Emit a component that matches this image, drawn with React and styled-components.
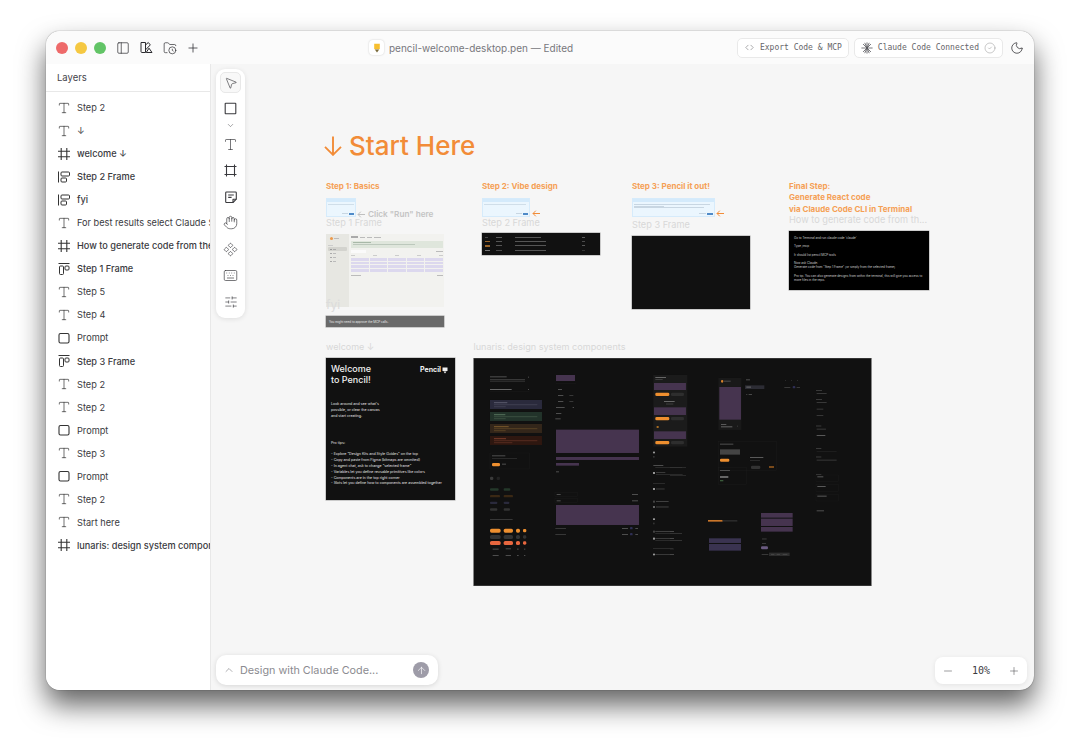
import React from "react";
import styled, { createGlobalStyle } from "styled-components";
import {
  PanelLeft, FolderClock, Plus, ChevronsLeftRight, CircleCheck, Moon, Type, ChevronDown,
  MousePointer2, Hand, Component, Keyboard, SlidersHorizontal, ChevronUp, ArrowUp, Minus,
} from "lucide-react";

const GlobalStyle = createGlobalStyle`
  html, body { margin: 0; padding: 0; background: #fff; }
  body { font-family: Inter, "Noto Sans", sans-serif; }
`;

const Page = styled.div`
  width: 1080px;
  height: 751px;
  padding: 31px 46px 61px;
  box-sizing: border-box;
  overflow: hidden;
`;

const Window = styled.div`
  height: 659px;
  display: flex;
  flex-direction: column;
  border-radius: 14px;
  overflow: hidden;
  background: #f6f6f6;
  box-shadow: 0 0 1px rgba(0,0,0,.7), 0 15px 28px rgba(0,0,0,.62);
`;

const TitleBar = styled.div`
  height: 33px;
  flex: none;
  display: flex;
  align-items: center;
  padding: 0 10px;
  background: #fbfbfb;
  position: relative;
`;

const Lights = styled.div`
  display: flex;
  gap: 7px;
  margin-right: 10px;
`;

const Light = styled.span`
  width: 12px;
  height: 12px;
  border-radius: 50%;
  background: ${p => p.$c};
`;

const BarIcons = styled.div`
  display: flex;
  align-items: center;
  gap: 9px;
  color: #2c2c30;
`;

const FileTitle = styled.div`
  display: flex;
  align-items: center;
  gap: 5px;
  margin-left: 169px;
  font-size: 10px;
  color: #77777c;
`;

const FileLogo = styled.span`
  width: 15px;
  height: 15px;
  border-radius: 4px;
  background: #fff;
  box-shadow: 0 0 2px rgba(0,0,0,.2);
  display: flex;
  align-items: center;
  justify-content: center;
`;

const BarRight = styled.div`
  margin-left: auto;
  display: flex;
  align-items: center;
  gap: 5px;
`;

const MonoButton = styled.div`
  height: 20px;
  box-sizing: border-box;
  display: flex;
  align-items: center;
  gap: 5px;
  padding: 0 6px;
  border: 1px solid #e9e9e9;
  border-radius: 5px;
  background: #fff;
  font-family: "DejaVu Sans Mono", "Liberation Mono", monospace;
  font-size: 8px;
  color: #66666a;
`;

const ThemeIcon = styled.span`
  display: flex;
  margin-left: 2px;
  color: #2c2c30;
`;

const Body = styled.div`
  flex: 1;
  display: flex;
  min-height: 0;
`;

const Sidebar = styled.aside`
  width: 165px;
  flex: none;
  box-sizing: border-box;
  background: #fff;
  border-right: 1px solid #e8e8e8;
  overflow: hidden;
`;

const SideHeader = styled.div`
  height: 27px;
  padding-left: 11px;
  display: flex;
  align-items: center;
  font-size: 9.5px;
  color: #44444a;
  border-bottom: 1px solid #e8e8e8;
`;

const LayerList = styled.div`
  padding-top: 4px;
`;

const LayerRow = styled.div`
  height: 23.05px;
  display: flex;
  align-items: center;
  white-space: nowrap;
  font-size: 9.2px;
  font-weight: ${p => (p.$frame ? 500 : 400)};
  color: #3a3a3e;
`;

const LayerIcon = styled.span`
  width: 14px;
  margin: 0 6px 0 11px;
  flex: none;
  display: flex;
  justify-content: center;
  color: #333;
`;

const Canvas = styled.main`
  flex: 1;
  position: relative;
  overflow: hidden;
`;

const Toolbar = styled.div`
  position: absolute;
  left: 5px;
  top: 5px;
  width: 29px;
  height: 249px;
  box-sizing: border-box;
  padding-top: 3px;
  display: flex;
  flex-direction: column;
  align-items: center;
  background: #fff;
  border-radius: 9px;
  box-shadow: 0 1px 5px rgba(0,0,0,.1);
  color: #3a3a3e;
`;

const ToolButton = styled.div`
  width: 21px;
  height: ${p => p.$h || 26.4}px;
  flex: none;
  display: flex;
  align-items: center;
  justify-content: center;
  box-sizing: border-box;
  border-radius: 5px;
  ${p => p.$active && `
    height: 21px;
    margin-bottom: 5px;
    background: #f8f8f8;
    border: 1px solid #e8e8e8;
  `}
`;

const Item = styled.div`
  position: absolute;
  left: ${p => p.$x - 211}px;
  top: ${p => p.$y - 64}px;
`;

const Heading = styled(Item)`
  display: flex;
  align-items: center;
  gap: 7px;
  font-size: 26px;
  font-weight: 500;
  line-height: 30px;
  color: #f28c38;
  white-space: nowrap;
`;

const StepLabel = styled(Item)`
  font-size: 8px;
  font-weight: 700;
  line-height: 11.6px;
  color: #f5a055;
  white-space: nowrap;
`;

const FrameLabel = styled(Item)`
  font-size: ${p => p.$size || 9.2}px;
  line-height: 12px;
  font-weight: 400;
  color: #d8d8d8;
  white-space: nowrap;
`;

const RunHint = styled(Item)`
  display: flex;
  align-items: center;
  gap: 3px;
  font-size: 8.2px;
  font-weight: 600;
  line-height: 10px;
  color: #c4c4c4;
  white-space: nowrap;
`;

const PromptThumb = styled(Item)`
  width: ${p => p.$w}px;
  height: 18.5px;
  box-sizing: border-box;
  padding: 0 1px;
  display: flex;
  flex-direction: column;
  background: #ebf6fe;
  border: 1px solid #d6ebfb;
`;

const PromptHead = styled.div`
  height: 3px;
  margin: 0 -1px 2px;
  background: #d4eafb;
`;

const Line = styled.div`
  width: ${p => p.$w}px;
  height: ${p => p.$h || 1}px;
  margin-top: ${p => p.$mt || 0}px;
  flex: none;
  background: ${p => p.$c || "#888"};
`;

const RunRow = styled.div`
  margin-top: auto;
  margin-bottom: 1px;
  display: flex;
  justify-content: flex-end;
  align-items: center;
  gap: 1px;
`;

const Frame = styled(Item)`
  width: ${p => p.$w}px;
  height: ${p => p.$h}px;
  box-sizing: border-box;
  background: ${p => p.$bg || "#111"};
  box-shadow: 0 0 0 .5px rgba(0,0,0,.35);
  overflow: hidden;
`;

const AppFrame = styled(Frame)`
  display: flex;
  box-shadow: none;
`;

const AppSide = styled.div`
  width: 23px;
  flex: none;
  padding: 2px 2px;
  box-sizing: border-box;
  background: #e7e7e2;
  display: flex;
  flex-direction: column;
`;

const NavItem = styled.div`
  height: 4px;
  margin-top: ${p => p.$mt || 0}px;
  padding-left: 2px;
  display: flex;
  align-items: center;
  gap: 1px;
  border-radius: 1px;
  background: ${p => (p.$on ? "#d3d3ce" : "transparent")};
`;

const AppLogo = styled.span`
  width: 3px;
  height: 3px;
  border-radius: 50%;
  background: #ec9a4c;
`;

const AppMain = styled.div`
  flex: 1;
  padding: 2px 1px 0 2px;
  display: flex;
  flex-direction: column;
`;

const Tabs = styled.div`
  display: flex;
  gap: 2px;
  align-items: center;
`;

const Callout = styled.div`
  height: 7px;
  margin-top: 3px;
  padding: 1px 2px;
  box-sizing: border-box;
  background: #dfe6dc;
`;

const SplitRow = styled.div`
  margin-top: ${p => p.$mt || 0}px;
  display: flex;
  justify-content: space-between;
  align-items: center;
`;

const CellGrid = styled.div`
  margin-top: ${p => p.$mt || 0}px;
  display: grid;
  grid-template-columns: repeat(5, 1fr);
  gap: ${p => p.$gap || 0}px 1px;
`;

const Cell = styled.div`
  height: 2.7px;
  background: #dcd8ee;
`;

const TinyNote = styled(Frame)`
  padding-left: 3px;
  display: flex;
  align-items: center;
  background: #6a6a6a;
  font-size: 3px;
  color: #e8e8e8;
  white-space: nowrap;
`;

const FyiLabel = styled(Item)`
  font-size: 12px;
  line-height: 12px;
  color: #dcdcdc;
`;

const TableFrame = styled(Frame)`
  padding: 2px 3px 0;
  display: flex;
  flex-direction: column;
`;

const TableRow = styled.div`
  height: 4.4px;
  display: grid;
  grid-template-columns: 11px 19px 67px 1fr;
  align-items: center;
`;

const CodeFrame = styled(Frame)`
  padding: 5px 5px;
  background: #000;
  font-size: 3px;
  line-height: 4.1px;
  color: #d0d0d0;
  white-space: nowrap;
`;

const Para = styled.p`
  margin: 0 0 4.3px;
`;

const WelcomeFrame = styled(Frame)`
  padding: 6px 5px;
  color: #e6e6e6;
`;

const WelcomeHead = styled.div`
  display: flex;
  justify-content: space-between;
  align-items: flex-start;
`;

const WelcomeTitle = styled.div`
  font-size: 9px;
  line-height: 10.6px;
  font-weight: 500;
  color: #f2f2f2;
`;

const WelcomeLogo = styled.div`
  display: flex;
  align-items: center;
  gap: 1px;
  margin: 2px 2px 0 0;
  font-size: 7px;
  line-height: 8px;
  font-weight: 700;
  color: #f2f2f2;
`;

const WelcomeText = styled.div`
  margin-top: ${p => p.$mt}px;
  font-size: 3.6px;
  line-height: 5.8px;
  white-space: nowrap;
`;

const MiniSvg = styled.svg`
  position: absolute;
  left: ${473 - 211}px;
  top: ${358 - 64}px;
  display: block;
`;

const PromptBar = styled.div`
  position: absolute;
  left: 5px;
  bottom: 5px;
  width: 222px;
  height: 30px;
  box-sizing: border-box;
  padding: 0 9px 0 7px;
  display: flex;
  align-items: center;
  gap: 5px;
  background: #fff;
  border-radius: 10px;
  box-shadow: 0 1px 5px rgba(0,0,0,.13);
  font-size: 10.8px;
  color: #8b8b90;
`;

const SendButton = styled.span`
  width: 16px;
  height: 16px;
  margin-left: auto;
  border-radius: 50%;
  background: #9e9ca8;
  color: #fff;
  display: flex;
  align-items: center;
  justify-content: center;
`;

const ZoomBar = styled.div`
  position: absolute;
  right: 7px;
  bottom: 6px;
  width: 92px;
  height: 27px;
  box-sizing: border-box;
  padding: 0 7px;
  display: flex;
  align-items: center;
  justify-content: space-between;
  background: #fff;
  border-radius: 8px;
  box-shadow: 0 1px 5px rgba(0,0,0,.08);
  font-family: "DejaVu Sans Mono", monospace;
  font-size: 10px;
  color: #3a3a3e;
`;

// small drawn icons that the icon package has no match for
const HashIcon = () => (
  <svg width="14" height="14" viewBox="0 0 14 14" fill="none" stroke="currentColor" strokeWidth="1.1">
    <path d="M4.2 1v12M9.8 1v12M1 4.2h12M1 9.8h12" />
  </svg>
);

const StackIcon = () => (
  <svg width="14" height="14" viewBox="0 0 14 14" fill="none" stroke="currentColor" strokeWidth="1">
    <path d="M1.5 1.5v11" />
    <rect x="4" y="2" width="8.5" height="4" rx="1" />
    <rect x="4" y="8" width="5.5" height="4" rx="1" />
  </svg>
);

const RowIcon = () => (
  <svg width="14" height="14" viewBox="0 0 14 14" fill="none" stroke="currentColor" strokeWidth="1">
    <path d="M1.5 1.5h11" />
    <rect x="2.5" y="4" width="4" height="8.5" rx="1" />
    <rect x="8" y="4" width="4" height="4" rx="1" />
  </svg>
);

const RectIcon = () => (
  <svg width="14" height="14" viewBox="0 0 14 14" fill="none" stroke="currentColor" strokeWidth="1.1">
    <rect x="2" y="2.5" width="10" height="9.5" rx="1.5" />
  </svg>
);

const TextIcon = () => <Type size={14} strokeWidth={1.2} />;

const ShapesIcon = () => (
  <svg width="15" height="15" viewBox="0 0 15 15" fill="none" stroke="currentColor" strokeWidth="1" strokeLinejoin="round">
    <path d="M2 2.5h4.5v10H3a1 1 0 0 1-1-1z" />
    <path d="M6.5 5 9.3 2.5l2 2.4-4.8 5" />
    <path d="M10 8.2 13 12.5H7.2z" />
  </svg>
);

const FrameToolIcon = () => (
  <svg width="15" height="15" viewBox="0 0 15 15" fill="none" stroke="currentColor" strokeWidth="1.1">
    <path d="M1.5 3.5h12M1.5 11.5h12M3.5 1.5v12M11.5 1.5v12" />
  </svg>
);

const SquareToolIcon = () => (
  <svg width="13" height="13" viewBox="0 0 13 13" fill="none" stroke="currentColor" strokeWidth="1.1">
    <rect x="1.2" y="1.2" width="10.6" height="10.6" rx=".6" />
  </svg>
);

const NoteToolIcon = () => (
  <svg width="14" height="14" viewBox="0 0 14 14" fill="none" stroke="currentColor" strokeWidth="1.1" strokeLinejoin="round">
    <path d="M2.5 2h9a.8.8 0 0 1 .8.8v6.4L9 12.5H2.5a.8.8 0 0 1-.8-.8V2.8a.8.8 0 0 1 .8-.8z" />
    <path d="M9 12.5V9.2h3.3M4.2 5h5.6M4.2 7.4h3.4" />
  </svg>
);

const BurstIcon = () => (
  <svg width="12" height="12" viewBox="0 0 12 12" stroke="#55555a" strokeWidth=".8" strokeLinecap="round">
    <path d="M6 .8v10.4M.8 6h10.4M2.3 2.3l7.4 7.4M9.7 2.3l-7.4 7.4M3.9 1.2l4.2 9.6M8.1 1.2l-4.2 9.6" />
  </svg>
);

const PencilMark = ({ size = 10 }) => (
  <svg width={size} height={size} viewBox="0 0 10 10">
    <path d="M2.2.8h5.6v5.4H2.2z" fill="#f7bf2f" />
    <path d="M2.8 6.6h4.4L5 9.4z" fill="#7a6a3a" />
  </svg>
);

const WelcomeMark = () => (
  <svg width="6" height="7" viewBox="0 0 6 7">
    <path d="M.5.5h5v3.5h-5z" fill="#f2f2f2" />
    <path d="M1.5 4.6h3L3 6.6z" fill="#f2f2f2" />
  </svg>
);

const ArrowIcon = () => (
  <svg width="18" height="20" viewBox="0 0 18 20" fill="none" stroke="#f28c38" strokeWidth="1.9">
    <path d="M9 .5v18M1 10.8l8 8 8-8" />
  </svg>
);

const SideArrow = ({ color = "#f28c38" }) => (
  <svg width="8" height="7" viewBox="0 0 8 7" fill="none" stroke={color} strokeWidth="1">
    <path d="M8 3.5H1M3.8.7 1 3.5l2.8 2.8" />
  </svg>
);

const layers = [
  ["t", "Step 2"], ["t", "↓"], ["f", "welcome ↓"], ["s", "Step 2 Frame"], ["s", "fyi"],
  ["t", "For best results select Claude Sonnet"], ["f", "How to generate code from the design"],
  ["r", "Step 1 Frame"], ["t", "Step 5"], ["t", "Step 4"], ["b", "Prompt"], ["r", "Step 3 Frame"],
  ["t", "Step 2"], ["t", "Step 2"], ["b", "Prompt"], ["t", "Step 3"], ["b", "Prompt"], ["t", "Step 2"],
  ["t", "Start here"], ["f", "lunaris: design system components"],
];

const layerIcons = { t: TextIcon, f: HashIcon, s: StackIcon, r: RowIcon, b: RectIcon };

const PU = "#46344f";
const OR = "#ee8f2f";
const RD = "#e8673f";
const T1 = "#4f4f4f";
const T2 = "#383838";
const BD = "#1f1f1f";

// thumbnail of the design system frame, coordinates are in 3x crop units
const miniLeft = [
  [60,64,50,3,T1],[60,72,105,3,T2],[60,77,105,3,T2],[174,65,3,3,T1],[60,102,65,3,"#666"],[174,102,3,3,T1],[60,108,118,1,BD],
  [60,135,156,27,"#2a2a3c"],[72,142,40,2.5,"#667"],[72,148,130,2.5,"#445"],[72,154,35,2.5,"#445"],
  [60,171,156,27,"#22332a"],[72,178,34,2.5,"#5f7f66"],[72,184,130,2.5,"#3f5545"],[72,190,35,2.5,"#3f5545"],
  [60,207,156,27,"#33261a"],[72,214,44,2.5,"#8a6530"],[72,220,130,2.5,"#5f4726"],[72,226,35,2.5,"#5f4726"],
  [60,243,156,27,"#2e1710"],[72,250,36,2.5,"#8a4530"],[72,256,130,2.5,"#5f3022"],[72,262,55,2.5,"#5f3022"],
  [60,294,118,48,"none",BD],[66,301,40,3,T1],[66,309,75,2,T2],[66,324,24,10,OR],[96,326,12,3,T1],
  [60,365,10,10,"#3a3a3a"],[80,365,10,10,"#222"],
  [60,400,26,7,"#24382a"],[101,400,20,7,"#24382a"],[60,420,30,7,"#3a2814"],[101,420,28,7,"#3a2814"],
  [60,440,22,7,"#2a2a3c"],[101,440,17,7,"#2a2a3c"],[60,460,22,7,"#333"],[101,460,19,7,"#333"],[60,492,68,3,T2],
  [60,521,32,12,OR],[101,521,28,12,OR],[138,521,12,12,OR],[159,522,10,10,OR],
  [60,540,32,12,"#333"],[101,540,28,12,"#333"],[138,540,12,12,"#333"],[159,541,10,10,"#333"],
  [60,558,32,12,RD],[101,558,28,12,RD],[138,558,12,12,RD],[159,559,10,10,RD],
  [68,581,18,3,T1],[107,580,16,3,T1],[141,581,5,3,T1],[162,581,4,3,T1],
  [68,600,18,3,T1],[107,600,16,3,T1],[141,600,5,3,T1],[162,600,4,3,T1],
  [258,60,57,18,PU],[258,84,60,1,BD],[264,102,12,3,T1],[264,120,16,3,T1],[298,120,12,3,T2],
  [264,138,16,3,T1],[298,138,12,3,T2],[258,156,26,3,T1],[308,156,4,3,T1],[258,174,16,3,T1],[256,190,16,3,T1],
  [258,224,249,70,PU],[258,306,249,9,PU],[258,324,69,8,PU],[258,349,9,3,T1],
  [255,412,68,12,"none",BD],[260,417,12,3,T1],[486,417,18,3,T1],[255,431,68,12,"none",BD],[260,436,12,3,T1],[486,436,18,3,T1],
  [258,450,249,60,PU],[256,519,32,3,T2],[456,519,18,3,T1],[480,516,8,7,"#2f2f55"],[496,519,8,3,T1],
  [256,537,32,3,T2],[456,537,18,3,T1],[480,534,8,7,"#2f2f55"],[496,537,8,3,T1],
  [550,60,102,215,"#1b1b1b"],[556,66,32,3,"#666"],[556,72,22,2,T1],
  [552,84,96,21,PU],[556,113,42,10,OR],[603,113,39,10,"#2e2e2e"],[582,138,32,3,"#666"],[588,146,22,2,T1],
  [552,157,96,23,PU],[556,186,42,10,OR],[603,186,39,10,"#2e2e2e"],[560,213,6,6,"#a66b22"],
  [552,229,96,23,PU],[556,258,42,10,OR],[603,258,39,10,"#2e2e2e"],
  [549,290,6,5,"#999"],[549,303,5,5,"#333"],[550,330,30,2.5,"#5a5a5a"],[556,336,80,2,T2],
  [549,351,6,6,"#999"],[558,352,28,2,T1],[558,358,80,2,T2],[549,385,36,2,T2],[549,399,6,6,"#999"],[558,401,26,2,T1],
  [549,437,6,6,"#444"],[558,439,38,2,"#5a5a5a"],[549,453,6,6,"#666"],[558,455,38,2,"#5a5a5a"],
  [549,490,6,5,"#999"],[549,503,5,5,"#333"],[549,527,6,6,"#444"],[556,528,56,2,"#5a5a5a"],[556,534,80,2,T2],
  [549,548,6,6,"#999"],[556,550,56,2,T1],[556,556,80,2,T2],[549,580,60,2,T2],[549,596,6,5,"#999"],[556,597,56,2,T1],
];

const miniRight = [
  [0,337,48,2,T2],[0,360,48,2,T2],[0,529,12,2,T1],[0,535,36,2,T2],[0,550,12,2,T1],[0,556,36,2,T2],[0,581,12,2,T2],[0,597,12,2,T1],
  [145,69,69,156,"#191919"],[153,75,7,8,"#d8832c"],[162,77,20,3,T1],[148,96,65,98,PU],[153,207,16,3,"#5a5a5a"],[153,214,34,3,"#666"],[202,212,2,3,T1],
  [228,73,12,3,T1],[225,91,58,11,"#2c2c34"],[229,95,14,2.5,"#777"],[228,117,4,2,T1],[236,117,10,2,"#666"],
  [345,75,2,2,T1],[363,75,2,2,T1],[382,75,2,2,T1],[343,96,18,2,T1],[368,93,8,7,"#2f2f55"],[380,96,10,2,T1],
  [145,260,175,86,"none",BD],[145,338,85,50,"none",BD],[150,266,40,3,T1],[150,283,60,16,"#444"],[150,311,28,9,OR],
  [240,306,40,3,"#5a5a5a"],[240,315,30,2,T2],[243,332,28,10,"#333"],[297,333,15,6,"#7a4a1a"],[150,345,30,3,T1],[150,363,25,6,"#666"],[150,375,10,4,"#3a5a3a"],
  [438,105,18,2,T1],[440,114,30,3,T2],[438,132,18,2,T1],[440,141,30,3,T2],[440,161,20,3,T2],[440,180,20,3,T2],
  [438,212,16,2,T1],[440,221,28,3,T2],[440,240,26,3,"#5a5a5a"],[438,280,16,2,T1],[440,288,60,1,T2],[438,305,16,2,T1],[440,314,60,3,T2],
  [438,357,16,2,T1],[438,360,67,20,"none",BD],[442,364,18,3,"#5a5a5a"],[438,389,67,20,"none",BD],[442,393,25,3,"#5a5a5a"],[438,418,67,20,"none",BD],[442,422,28,3,"#5a5a5a"],[440,466,22,3,T1],
  [114,495,44,5,"#c9762a"],[158,495,44,5,"#2a2a2a"],[273,474,95,14,PU],[273,491,95,22,PU],[273,516,95,14,PU],
  [117,550,96,14,"#3a3350"],[117,567,96,20,"#3a3350"],[276,551,14,2,T1],[276,564,12,2,T1],[273,574,21,9,"#6a5a80"],[275,597,20,2,T1],
  [297,593,62,10,"#2e2e2e"],[303,597,10,2,T1],[320,597,10,2,T1],[338,597,14,2,T1],
];

const miniRects = list =>
  list.map(([x, y, w, h, fill, stroke], i) => (
    <rect
      key={i}
      x={x}
      y={y}
      width={w}
      height={h}
      rx={h >= 7 && h <= 12 && w <= 42 ? h / 2.5 : 0}
      fill={fill}
      stroke={stroke}
      strokeWidth={stroke ? 1 : 0}
    />
  ));

const DesignSystemThumb = () => (
  <MiniSvg width="399" height="228" viewBox="473 358 399 228">
    <rect x="473.5" y="358" width="398" height="228" fill="#111" stroke="#8a8a8a" strokeWidth=".6" />
    <g transform="translate(470 355) scale(.3333)">{miniRects(miniLeft)}</g>
    <g transform="translate(670 355) scale(.3333)">{miniRects(miniRight)}</g>
  </MiniSvg>
);

const tableRows = [
  ["#444", "#5a5a5a", "#555", "#5a5a5a"],
  ["#9a6428", "#555", "#555", "#4a4a4a"],
  ["#9a6428", "#555", "#555", "#555"],
  ["#777", "#4a4a4a", "#555", "#333"],
];

const App = () => (
  <Page>
    <GlobalStyle />
    <Window>
      <TitleBar>
        <Lights>
          <Light $c="#ee6a6a" />
          <Light $c="#f5c842" />
          <Light $c="#62c466" />
        </Lights>
        <BarIcons>
          <PanelLeft size={14} strokeWidth={1.2} />
          <ShapesIcon />
          <FolderClock size={14} strokeWidth={1.2} />
          <Plus size={14} strokeWidth={1.3} />
        </BarIcons>
        <FileTitle>
          <FileLogo><PencilMark /></FileLogo>
          pencil-welcome-desktop.pen — Edited
        </FileTitle>
        <BarRight>
          <MonoButton>
            <ChevronsLeftRight size={11} strokeWidth={1.2} />
            Export Code &amp; MCP
          </MonoButton>
          <MonoButton>
            <BurstIcon />
            Claude Code Connected
            <CircleCheck size={12} strokeWidth={.9} color="#888" />
          </MonoButton>
          <ThemeIcon><Moon size={14} strokeWidth={1.3} /></ThemeIcon>
        </BarRight>
      </TitleBar>
      <Body>
        <Sidebar>
          <SideHeader>Layers</SideHeader>
          <LayerList>
            {layers.map(([kind, name], i) => {
              const Icon = layerIcons[kind];
              return (
                <LayerRow key={i} $frame={kind === "f" || kind === "s" || kind === "r"}>
                  <LayerIcon><Icon /></LayerIcon>
                  {name}
                </LayerRow>
              );
            })}
          </LayerList>
        </Sidebar>
        <Canvas>
          <Heading $x={324} $y={131}>
            <ArrowIcon />
            Start Here
          </Heading>

          <StepLabel $x={326} $y={180.5}>Step 1: Basics</StepLabel>
          <StepLabel $x={482} $y={180.5}>Step 2: Vibe design</StepLabel>
          <StepLabel $x={632} $y={180.5}>Step 3: Pencil it out!</StepLabel>
          <StepLabel $x={789} $y={180.5}>
            Final Step:<br />Generate React code<br />via Claude Code CLI in Terminal
          </StepLabel>

          <PromptThumb $x={326} $y={198} $w={30}>
            <PromptHead />
            <Line $w={26} $c="#d0dee9" />
            <RunRow><Line $w={6} $c="#c8d6e2" /><Line $w={5} $h={2} $c="#4f8ac8" /></RunRow>
          </PromptThumb>
          <PromptThumb $x={482} $y={198} $w={48}>
            <PromptHead />
            <Line $w={42} $c="#d0dee9" />
            <RunRow><Line $w={6} $c="#c8d6e2" /><Line $w={5} $h={2} $c="#4f8ac8" /></RunRow>
          </PromptThumb>
          <PromptThumb $x={632} $y={198} $w={83}>
            <PromptHead />
            <Line $w={76} $c="#c8d6e2" />
            <Line $w={30} $c="#c8d6e2" $mt={.6} />
            <Line $w={70} $c="#c8d6e2" $mt={.6} />
            <RunRow><Line $w={7} $c="#c8d6e2" /><Line $w={6} $h={2} $c="#4f8ac8" /></RunRow>
          </PromptThumb>

          <RunHint $x={357} $y={209}><SideArrow color="#c0c0c0" />Click "Run" here</RunHint>
          <RunHint $x={532} $y={210}><SideArrow /></RunHint>
          <RunHint $x={716} $y={210}><SideArrow /></RunHint>

          <FrameLabel $x={326} $y={216.5}>Step 1 Frame</FrameLabel>
          <FrameLabel $x={482} $y={216.5}>Step 2 Frame</FrameLabel>
          <FrameLabel $x={632} $y={219}>Step 3 Frame</FrameLabel>
          <FrameLabel $x={789} $y={214}>How to generate code from th...</FrameLabel>

          <AppFrame $x={326} $y={234} $w={118} $h={73} $bg="#f2f2ef">
            <AppSide>
              <NavItem><AppLogo /><Line $w={5} $c="#bbb" /></NavItem>
              <Line $w={5} $c="#ccc" $mt={5} />
              <NavItem $on $mt={1}><Line $w={2} $c="#999" /><Line $w={3} $c="#aaa" /></NavItem>
              <NavItem><Line $w={2} $c="#aaa" /><Line $w={3} $c="#bbb" /></NavItem>
              <NavItem><Line $w={2} $c="#aaa" /><Line $w={3} $c="#bbb" /></NavItem>
              <NavItem><Line $w={2} $c="#aaa" /><Line $w={3} $c="#bbb" /></NavItem>
            </AppSide>
            <AppMain>
              <Tabs>
                <Line $w={7} $h={2} $c="#aaa" />
                <Line $w={5} $c="#bbb" />
                <Line $w={5} $c="#bbb" />
                <Line $w={7} $c="#bbb" />
              </Tabs>
              <Callout>
                <Line $w={18} $c="#a8b8a8" />
                <Line $w={62} $c="#bcc8bc" $mt={1} />
              </Callout>
              <SplitRow $mt={2}>
                <Line $w={15} $h={3} $c="#fafafa" />
                <Line $w={7} $c="#bbb" />
              </SplitRow>
              <SplitRow $mt={2}>
                <Line $w={4} $c="#ccc" />
                <Line $w={4} $c="#ccc" />
                <Line $w={4} $c="#ccc" />
                <Line $w={4} $c="#ccc" />
                <Line $w={4} $c="#ccc" />
              </SplitRow>
              <CellGrid $mt={2} $gap={1}>
                {Array.from({ length: 20 }, (_, i) => <Cell key={i} />)}
              </CellGrid>
              <SplitRow $mt={3}>
                <Line $w={10} $c="#bbb" />
                <Line $w={6} $c="#bbb" />
              </SplitRow>
            </AppMain>
          </AppFrame>
          <FyiLabel $x={326} $y={299}>fyi</FyiLabel>
          <TinyNote $x={326} $y={316} $w={118} $h={11}>You might need to approve the MCP calls.</TinyNote>

          <TableFrame $x={482} $y={233} $w={118} $h={22}>
            {tableRows.map((cols, i) => (
              <TableRow key={i}>
                <Line $w={i === 0 ? 3 : 5} $h={1.4} $c={cols[0]} />
                <Line $w={6} $c={cols[1]} />
                <Line $w={i === 0 ? 26 : 31} $c={cols[2]} />
                <Line $w={3} $c={cols[3]} />
              </TableRow>
            ))}
          </TableFrame>

          <Frame $x={632} $y={236} $w={118} $h={73} />

          <CodeFrame $x={789} $y={231} $w={140} $h={59}>
            <Para>Go to Terminal and run claude code 'claude'</Para>
            <Para>Type /mcp</Para>
            <Para>It should list pencil MCP tools</Para>
            <Para>Now ask Claude:<br />Generate code from "Step 1 Frame" (or simply from the selected frame)</Para>
            <Para>Pro tip: You can also generate designs from within the terminal, this will give you access to<br />more files in the repo.</Para>
          </CodeFrame>

          <FrameLabel $x={326} $y={341} $size={9}>welcome ↓</FrameLabel>
          <FrameLabel $x={473.5} $y={341} $size={9.1}>lunaris: design system components</FrameLabel>

          <WelcomeFrame $x={326} $y={358} $w={129} $h={142}>
            <WelcomeHead>
              <WelcomeTitle>Welcome<br />to Pencil!</WelcomeTitle>
              <WelcomeLogo>Pencil<WelcomeMark /></WelcomeLogo>
            </WelcomeHead>
            <WelcomeText $mt={17}>
              Look around and see what's<br />possible, or clear the canvas<br />and start creating.
            </WelcomeText>
            <WelcomeText $mt={21}>Pro tips:</WelcomeText>
            <WelcomeText $mt={6}>
              - Explore "Design Kits and Style Guides" on the top<br />
              - Copy and paste from Figma (bitmaps are ommited)<br />
              - In agent chat, ask to change "selected frame"<br />
              - Variables let you define reusable primitives like colors<br />
              - Components are in the top right corner<br />
              - Slots let you define how to components are assembled together
            </WelcomeText>
          </WelcomeFrame>

          <DesignSystemThumb />

          <Toolbar>
            <ToolButton $active><MousePointer2 size={14} strokeWidth={1.1} /></ToolButton>
            <ToolButton $h={21}><SquareToolIcon /></ToolButton>
            <ToolButton $h={12}><ChevronDown size={9} strokeWidth={1.2} /></ToolButton>
            <ToolButton $h={26}><Type size={15} strokeWidth={1.1} /></ToolButton>
            <ToolButton><FrameToolIcon /></ToolButton>
            <ToolButton><NoteToolIcon /></ToolButton>
            <ToolButton><Hand size={15} strokeWidth={1.1} /></ToolButton>
            <ToolButton><Component size={15} strokeWidth={1.1} /></ToolButton>
            <ToolButton><Keyboard size={15} strokeWidth={1.1} /></ToolButton>
            <ToolButton><SlidersHorizontal size={14} strokeWidth={1.1} /></ToolButton>
          </Toolbar>

          <PromptBar>
            <ChevronUp size={12} strokeWidth={1.2} color="#77777c" />
            Design with Claude Code...
            <SendButton><ArrowUp size={11} strokeWidth={1.4} /></SendButton>
          </PromptBar>

          <ZoomBar>
            <Minus size={12} strokeWidth={1} />
            10%
            <Plus size={12} strokeWidth={1} />
          </ZoomBar>
        </Canvas>
      </Body>
    </Window>
  </Page>
);

export default App;
